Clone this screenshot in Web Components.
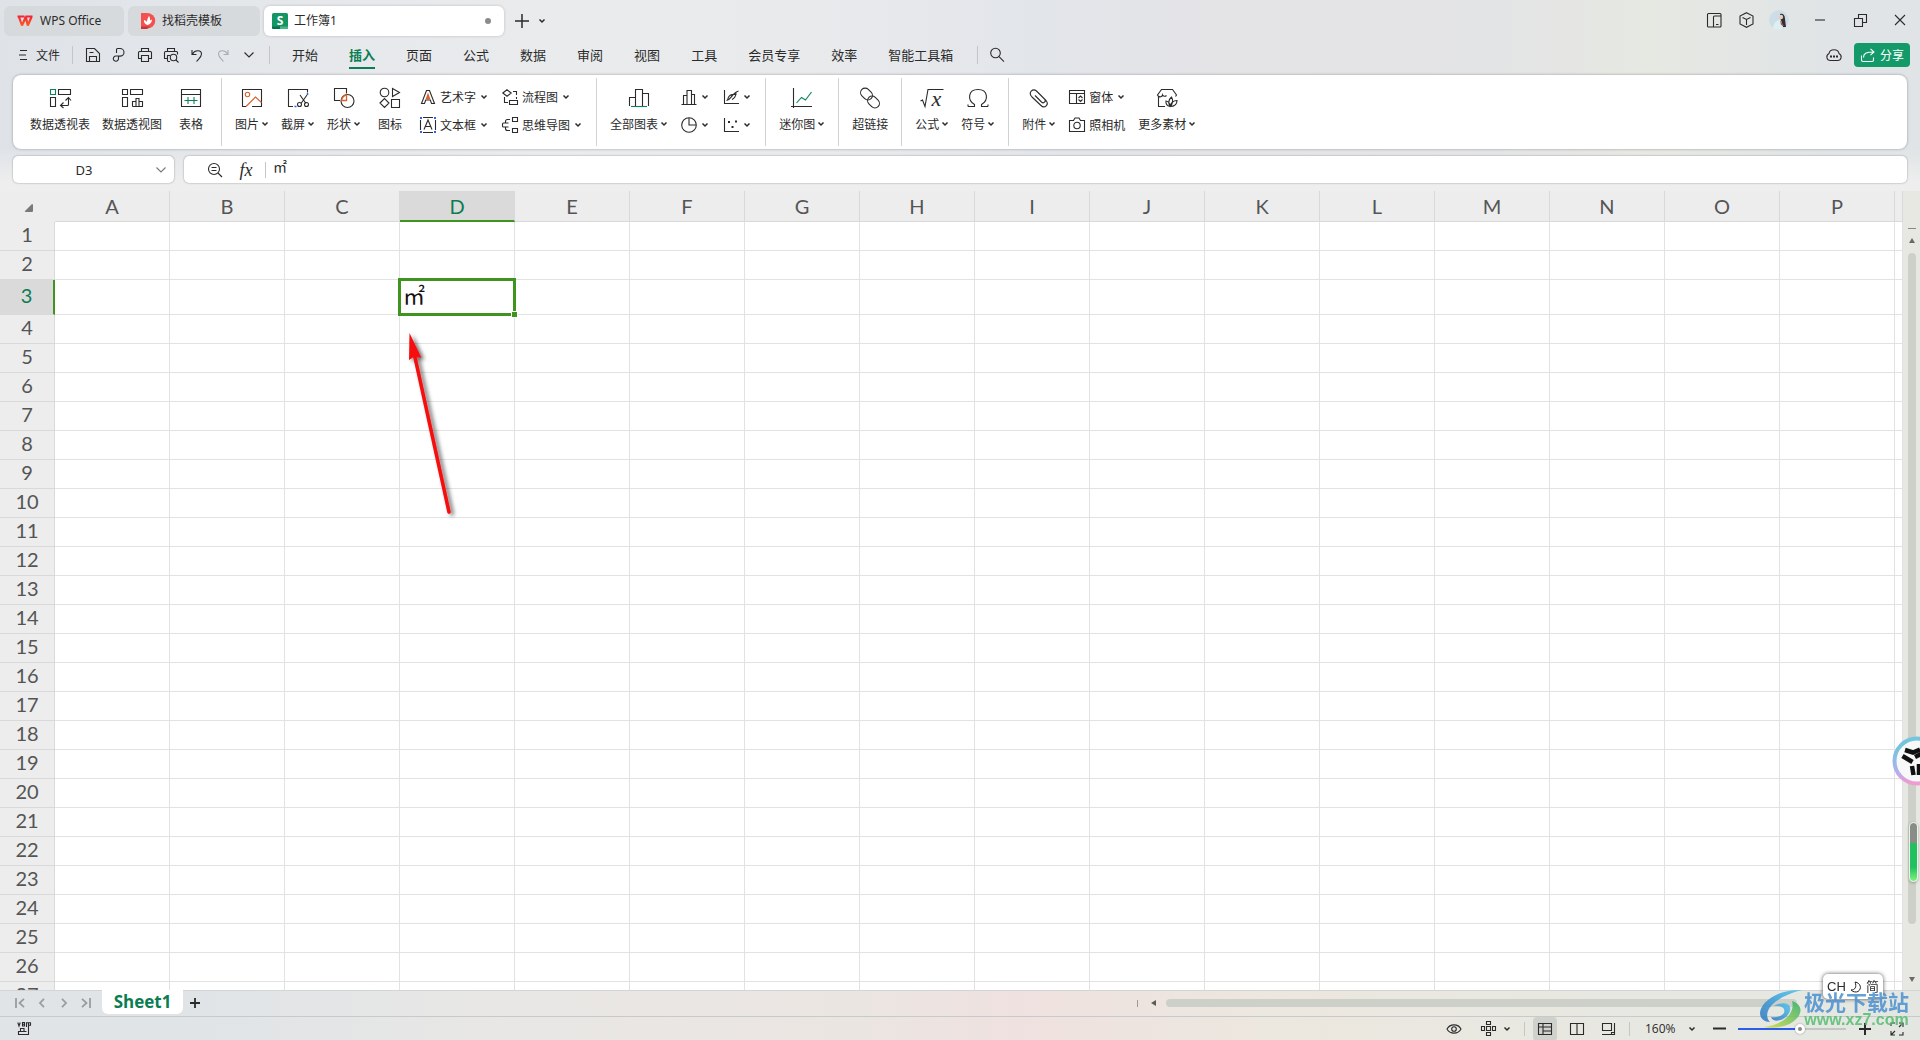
<!DOCTYPE html>
<html lang="zh-CN">
<head>
<meta charset="utf-8">
<title>工作簿1 - WPS Office</title>
<style>
html, body { margin: 0; height: 100%; }
body { font-family: "Noto Sans", "Noto Sans CJK SC", sans-serif; font-size: 12px; color: #2b2b2b; overflow: hidden; }
</style>
</head>
<body>
<wps-app></wps-app>
<script>
const RESET = `
  *, *::before, *::after { box-sizing: border-box; }
  button, input, select { font: inherit; color: inherit; background: none; border: 0; padding: 0; margin: 0; outline: 0; }
  a { color: inherit; text-decoration: none; }
  [hidden] { display: none; }`;

/* Registers an element; setup runs on the cloned content before it is connected. */
function define(name, css, html, setup) {
  const template = document.createElement('template');
  template.innerHTML = `<style>${RESET}${css}</style>${html}`;
  customElements.define(name, class extends HTMLElement {
    connectedCallback() {
      if (this.shadowRoot) return;
      const root = this.attachShadow({ mode: 'open' });
      const content = template.content.cloneNode(true);
      if (setup) setup.call(this, content);
      root.append(content);
    }
  });
}

/* Icon library: name -> [width, height, markup] */
const ICONS = {
  chev: [8, 6, '<path d="M1.5 1.5 4 4l2.500-2.500" stroke-width="1.500"/>'],
  chevWide: [12, 8, '<path d="M1.500 1.500 6 6l4.500-4.500"/>'],
  wps: [16, 12, '<defs><linearGradient id="g" x1="0" y1="0" x2="0" y2="1"><stop offset="0" stop-color="#f3253a"/><stop offset="1" stop-color="#ff5a1c"/></linearGradient></defs><path d="M.5 1.500H7.500M8.500 1.500h7M2 2l3 8.500L8.800 2l2 8.500L14.500 2" stroke="url(#g)" stroke-width="2.200" stroke-linejoin="bevel"/>'],
  docer: [14, 16, '<path d="M0 0h6a8 7.500 0 0 1 0 15.500H0z" fill="#f4504f" stroke="none"/><path d="M0 13.500h9l-3 2.500H0z" fill="#c93436" stroke="none"/><path d="M6.500 12C2.500 11 3 7 3 7s2 .5 3 2c0-3 2-6 2-6s1.500 2 1 4.500L11 6.500S11 11 6.500 12z" fill="#fff" stroke="none"/>'],
  sheet: [16, 16, '<path d="M1.500 0H14.500Q16 0 16 1.500V14.500Q16 16 14.500 16H1.500Q0 16 0 14.500V1.500Q0 0 1.500 0z" fill="#139663" stroke="none"/><path d="M0 13.500h8V16H1.500Q0 16 0 14.500z" fill="#0a7048" stroke="none"/><path d="M8 13.500h8v1Q16 16 14.500 16H8z" fill="#43b884" stroke="none"/><text x="8" y="12" text-anchor="middle" font-family="Open Sans" font-weight="700" font-size="12" fill="#fff" stroke="none">S</text>'],
  plus: [14, 14, '<path d="M7 0v14M0 7h14" stroke-width="1.500"/>'],
  menu: [10, 12, '<path d="M2 1.500h7M1 6h7M2 10.500h7"/>'],
  save: [14, 14, '<path d="M.5 13.500V.5h8L13.500 5.500v8zM3.500 13v-4.500h7V13M3.500 4.500h4"/>'],
  pdf: [14, 14, '<path d="M4.500 5V1.500Q4.500.5 5.500.5H8a4 3.800 0 0 1 0 7.600H6.500v2.400a2.600 2.600 0 1 1-2.600-2.500h2.600"/>'],
  print: [14, 14, '<path d="M3.500 4V.5h7V4M3.500 10.500H.5V4.500q0-1 1-1h11q1 0 1 1v6h-3M3.500 7.500h7v6h-7z"/>'],
  preview: [15, 15, '<path d="M3.500 4V.5h7V4M3 10.500H.5V4.500q0-1 1-1h11q1 0 1 1v2M3.500 13V7.500H6M3.500 13.500h2.500"/><circle cx="9.500" cy="9.500" r="3.200"/><path d="m12 12 2.500 2.500"/>'],
  undo: [12, 13, '<path d="M1 1v4.500h4.500M1.500 5C4 .5 10.500 1 10.500 5c0 3-2.500 4.500-5 7.500"/>'],
  redo: [12, 13, '<path d="M11 1v4.500H6.500M10.500 5C8 .5 1.500 1 1.500 5c0 3 2.500 4.500 5 7.500"/>'],
  search: [16, 16, '<circle cx="6.500" cy="6" r="4.800"/><path d="m10 9.700 5 5"/>'],
  split: [15, 15, '<path d="M7 14H1.500q-1 0-1-1V1.500q0-1 1-1H13q1 0 1 1V2.500M6.500 4q0-1 1-1H14v10q0 1-1 1H6.500zM9 11.500h2.500"/>'],
  cube: [15, 16, '<path d="M7.500.7 14 4v8l-6.500 3.300L1 12V4zM3.500 5.500l4 2 4-2M7.500 7.500v5.500"/>'],
  min: [12, 2, '<path d="M1 1h10"/>'],
  restore: [13, 13, '<path d="M.5 4.500h8v8h-8zM4.500 4V.5h8v8H9"/>'],
  close: [12, 12, '<path d="m1 1 10 10M11 1 1 11"/>'],
  cloud: [16, 14, '<path d="M4.500 12.500C.5 12.500-.5 7.500 3 5.500 4 .5 12 .5 13 5.500c3.500 2 2.500 7-1.500 7z"/><path d="M4 8.500h2M7 8.500h2M10 8.500h2" stroke-width="2"/>'],
  share: [16, 15, '<path d="M1.500 7.500v4.500q0 1.500 1.500 1.500h9q1.500 0 1.500-1.500V9.500M3.500 9.500C3.500 5.500 6 4 13.500 4M10.500.8 14 4l-3.500 3.200"/>'],
  pivot: [22, 20, '<path d="M9.500 1.500h12v5h-12zM1.500 9.500h5v9h-5z"/><path d="M1.500 1.500h5v5h-5z" stroke="#0a8457"/><path d="M19.500 10v6.500q0 1-1 1H12M16.500 12.500l3-3 2.500 3M14.500 14.500l-3 3 3 2.500"/>'],
  pivotChart: [22, 20, '<path d="M9.500 1.500h12v5h-12zM1.500 1.500h5v5h-5zM1.500 9.500h5v9h-5zM11.500 18.500v-5h3.500v5M15 18.500v-8h3v8M18 13.500h3.500v5H11.500"/>'],
  table: [22, 20, '<path d="M1.500 1.500h19v17h-19zM1.500 6.500h19"/><path d="M4.500 12.500h13M8 9v7M14 9v7" stroke="#0a8457"/>'],
  picture: [22, 20, '<path d="M11 18.500H20.500V1.500h-19v17H5"/><g stroke="#d9612c"><circle cx="6.500" cy="6.500" r="2.200"/><path d="m5 18.500 9.500-9.500 6 5.500"/></g>'],
  cut: [22, 20, '<path d="M6 18.500H1.500v-17h19v3M13 7l6 8.500M20 7l-6 8.500"/><circle cx="12.500" cy="16.500" r="2"/><circle cx="19.500" cy="16.500" r="2"/><path d="M20.500 5v2M7.500 18.500h2" stroke="#2d5ff0" stroke-width="1.500"/>'],
  shapes: [22, 22, '<path d="M7 13.500H1.500V1.500h12v5"/><circle cx="14.500" cy="14" r="6.500"/><path d="M8.500 13.500c.5-3.500 2.500-5 5-5.500v5.500z" stroke="#d9612c" stroke-width="1.300"/>'],
  icons: [22, 22, '<circle cx="5.500" cy="5.500" r="4.300"/><path d="m13.500 1.500 7 4-7 4zM1 16l4.500-4.500L10 16l-4.500 4.500zM12.500 12.500h8v8h-8z"/>'],
  art: [16, 16, '<path d="M1.500 14.500 6.500 1.500h3l5 13h-3l-1.200-3.500H5.700l-1.200 3.500z"/><path d="m5.500 10.500 2.500-7 2.500 7z" fill="#d9612c" stroke="none"/>'],
  textbox: [16, 16, '<path d="M3 .5h10M3 15.500h10M.5 3v10M15.500 3v10"/><g fill="#2d5ff0" stroke="none"><path d="M0 0h2v2H0zM14 0h2v2h-2zM0 14h2v2H0zM14 14h2v2h-2z"/></g><path d="m4 12.500 4-9.500 4 9.500M5.500 9.500h5"/>'],
  flow: [16, 16, '<path d="M.8 4 5 .8 9.200 4 5 7.200zM11 2.500h3.500V6M14.500 8v2M2.500 8v5.500H6M7.500 11.500h8v4h-8z"/>'],
  mind: [16, 16, '<path d="M6.500 6H1.500q-1 0-1 1v2q0 1 1 1h5M3.500 6V4.500q0-2 2-2H8M3.500 10v1.500q0 2 2 2H8M10.500.5h5v4h-5zM10.500 11.500h5v4h-5z"/>'],
  charts: [22, 20, '<path d="M1.500 18V9.500h6M7.500 18V1.500h7V18M14.500 5.500h6V18"/><path d="M3 18.500h16" stroke="#0a8457"/>'],
  bars: [16, 16, '<path d="M.5 15.500h15M2.500 15V6.500H6M6 15V1.500h4.500V15M10.500 5.500h3V15"/>'],
  lines: [16, 16, '<path d="M1.500 1v13.500H16M3.500 11.500c5-1 6-8 12-9.500M4.500 11c1-5 3-6 9-5.500M9 10.500c2-1 4-4 4-7"/>'],
  pie: [16, 16, '<circle cx="8" cy="8" r="7.300"/><path d="M8 1v7h7"/>'],
  scatter: [16, 16, '<path d="M1.500 1v13.500H16"/><path d="M5 4h2v2H5zM12 3.500h2v2h-2zM8.500 9h2v2h-2z" fill="currentColor" stroke="none"/>'],
  spark: [22, 20, '<path d="M2.500 0v20M0 18.500h21"/><path d="m5.500 15 5-5.500 4 2.500 6-8" stroke="#0a8457"/>'],
  link: [22, 22, '<rect x="1" y="2.500" width="13" height="9" rx="4.500" transform="rotate(45 7.500 7)"/><rect x="8" y="10.500" width="13" height="9" rx="4.500" transform="rotate(45 14.500 15)"/>'],
  formula: [24, 20, '<path d="m.5 13 2-1 2.500 6.500L8 1.500h15.500"/><text x="16.500" y="18" text-anchor="middle" font-family="Liberation Serif" font-style="italic" font-size="22" fill="currentColor" stroke="none">x</text>'],
  omega: [22, 20, '<path d="M1 18.500h6.500v-2C0 12 1 1.500 11 1.500S22 12 14.500 16.500v2H21M1 18.500v-2M21 18.500v-2"/>'],
  clip: [20, 20, '<path d="m9.500 5 7.500 7.500c3.500 4-1.500 8.500-5 5L3 9C-1.500 4 4 .3 7.500 3l8 8c2 2.500-.8 5-3 3L6 7.500"/>'],
  form: [16, 14, '<path d="M.5.5h15v13H.5zM.5 3.500h15M7.500 3.500v10M9.500 8l2-2 2 2M9.500 9.500l2 2 2-2"/>'],
  camera: [16, 16, '<path d="M.5 3.500h4l1.500-2.500h4l1.500 2.500h4v11H.5z"/><circle cx="8" cy="8.500" r="3.200"/>'],
  assets: [22, 20, '<path d="M9 18.500H2.500V8.500L1.500 7 5.500 1.500h11L20.500 7l-1 1.500M2 8c2 1.500 4 1 4.500-1 .5 1.500 3 1.500 4 .5M14 18.500c-2-3-1.500-7 1.500-9.500 2 3 1.500 7-1.500 9.500zM14 18.500c1-4 3-6 7-6 0 4-3 6-7 6zM14 18.500c-3-.5-4.500-2.500-4-5.500 3 .5 4 2.500 4 5.500z"/>'],
  lens: [16, 16, '<circle cx="7" cy="7" r="5.500"/><path d="m11 11 4 4M4.500 5.500h5M4.500 8.500h5"/>'],
  first: [10, 10, '<path d="M1 0v10M9 .8 4.500 5 9 9.200" stroke-width="1.800"/>'],
  prev: [8, 10, '<path d="M6 .8 2 5l4 4.200" stroke-width="1.800"/>'],
  next: [8, 10, '<path d="m2 .8 4 4.200-4 4.200" stroke-width="1.800"/>'],
  last: [10, 10, '<path d="M9 0v10M1 .8 5.500 5 1 9.200" stroke-width="1.800"/>'],
  add: [10, 10, '<path d="M5 0v10M0 5h10" stroke-width="1.800"/>'],
  macro: [15, 14, '<path d="M.8.5 2 4 3.200.5M5.500.5v3.500h2V.5zM5.500 2.300h2M9.500 5V.8h4v2.500h-2M11.500 1v11.500h-10V9.500h8M3.500 9V6.500h3.500V9"/>'],
  eye: [16, 12, '<path d="M1 6C4 .5 12 .5 15 6c-3 5.500-11 5.500-14 0z"/><circle cx="8" cy="6" r="2.300"/>'],
  locate: [15, 15, '<path d="M5.500 3.500v-3h4v3zM5.500 11.500v3h4v-3zM3.500 5.500h-3v4h3zM11.500 5.500h3v4h-3zM5.500 5.500h4v4h-4z"/>'],
  normal: [14, 14, '<path d="M.5 1.500h13v11H.5zM.5 5h13M5 1.500v11M5 9h8.500"/>'],
  pages: [14, 14, '<path d="M.5 1.500h13v11H.5zM7 1.500v11"/>'],
  breaks: [14, 14, '<path d="M.5 1.500h9v7h-9zM12.500 1v11.500H0M9.500 12.500v-2h3"/>'],
  minus: [13, 3, '<path d="M0 1.500h13" stroke-width="2"/>'],
  bigplus: [12, 12, '<path d="M6 0v12M0 6h12" stroke-width="2"/>'],
  full: [14, 14, '<path d="M5 1H1v3M9 1h4v4M1 9v4h4M13 10v3H9M9 5l3.500-3.500M5 9l-3.500 3.500"/>'],
  up: [6, 5, '<path d="M0 5 3 0l3 5z" fill="#6a6a6a" stroke="none"/>'],
  down: [6, 5, '<path d="M0 0h6L3 5z" fill="#6a6a6a" stroke="none"/>'],
  left: [5, 6, '<path d="M5 0v6L0 3z" fill="#5a5a5a" stroke="none"/>'],
};

define('wps-icon', `:host { display: inline-flex; flex: none; } svg { display: block; overflow: visible; }`, '<div></div>', function (root) {
  const [w, h, body] = ICONS[this.getAttribute('name')];
  root.querySelector('div').innerHTML = `<svg width="${w}" height="${h}" viewBox="0 0 ${w} ${h}" fill="none" stroke="currentColor" stroke-width="1.1" aria-hidden="true">${body}</svg>`;
});

/* Plain icon button */
define('icon-button', `
  :host { display: flex; flex: none; width: 26px; height: 24px; }
  button { flex: 1; display: flex; align-items: center; justify-content: center; border-radius: 4px; }
  :host([active]) button { background: #cfd1cd; }
  :host([muted]) { color: #a9adb2; }`,
  `<button type="button"><wps-icon></wps-icon></button>`,
  function (root) {
    root.querySelector('wps-icon').setAttribute('name', this.getAttribute('icon'));
    root.querySelector('button').setAttribute('aria-label', this.getAttribute('label') || '');
  });

define('v-rule', `:host { display: block; flex: none; width: 1px; height: var(--h, 18px); background: #c4c7ca; }`, '');

/* Document tab in the title bar */
define('doc-tab', `
  :host { display: flex; flex: none; height: 30px; }
  button { flex: 1; display: flex; align-items: center; gap: 7px; padding: 0 13px; border-radius: 6px; background: #d7dadd; white-space: nowrap; line-height: 16px; }
  :host([active]) button { background: #fff; padding: 0 8px; gap: 6px; box-shadow: 0 0 3px #0003; }
  i { display: none; width: 6px; height: 6px; border-radius: 50%; background: #8b8b8b; margin: 0 5px 0 auto; }
  :host([active]) i { display: block; }`,
  `<button type="button"><slot name="icon"></slot><span><slot></slot></span><i></i></button>`);

define('title-bar', `
  :host { display: flex; align-items: center; height: 42px; padding: 0 7px 0 4px; }
  .tabs { display: flex; gap: 4px; margin-right: 8px; }
  doc-tab:nth-child(1) { width: 120px; }
  doc-tab:nth-child(2) { width: 132px; }
  doc-tab:nth-child(3) { width: 240px; }
  .tools { display: flex; margin: 0 0 2px auto; align-items: center; gap: 6px; }
  .win { display: flex; margin-left: 12px; gap: 14px; }
  .avatar { display: block; width: 20px; height: 20px; border-radius: 50%; margin-left: 4px; }
  .more { width: 20px; }`,
  `<div class="tabs">
    <doc-tab><wps-icon slot="icon" name="wps"></wps-icon>WPS Office</doc-tab>
    <doc-tab><wps-icon slot="icon" name="docer"></wps-icon>找稻壳模板</doc-tab>
    <doc-tab active><wps-icon slot="icon" name="sheet"></wps-icon>工作簿1</doc-tab>
  </div>
  <icon-button icon="plus" label="新建" style="width:20px"></icon-button>
  <icon-button icon="chev" label="更多" class="more"></icon-button>
  <div class="tools">
    <icon-button icon="split" label="分屏"></icon-button>
    <icon-button icon="cube" label="应用"></icon-button>
    <svg class="avatar" viewBox="0 0 20 20" aria-hidden="true"><circle cx="10" cy="10" r="10" fill="#cbdde6"/><path d="M11 4c3-1 5 1 5 5l1 8h-3l-2-6z" fill="#342d32"/><circle cx="12" cy="7" r="2.200" fill="#eccbb8"/><path d="M4 18c1-6 4-8 8-8l2 9c-4 2-8 1-10-1z" fill="#dfeff0"/><path d="m11 10 4 6-3-1z" fill="#a05d62"/></svg>
    <div class="win">
      <icon-button icon="min" label="最小化"></icon-button>
      <icon-button icon="restore" label="还原"></icon-button>
      <icon-button icon="close" label="关闭"></icon-button>
    </div>
  </div>`);

define('menu-tab', `
  :host { display: flex; flex: none; font-size: 13px; }
  a { display: flex; align-items: center; height: 28px; border-bottom: 2px solid transparent; white-space: nowrap; }
  :host([active]) a { color: #0a7d52; font-weight: 700; border-bottom-color: #0a7d52; }`,
  `<a href="#"><slot></slot></a>`);

define('menu-bar', `
  :host { display: flex; align-items: center; height: 33px; padding: 0 10px 7px 18px; }
  .file { display: flex; align-items: center; gap: 8px; margin-right: 12px; }
  .quick { display: flex; margin: 0 7px; }
  nav { display: flex; gap: 31px; margin: 0 24px 0 22px; }
  .end { display: flex; align-items: center; gap: 7px; margin-left: auto; }
  .share { display: flex; align-items: center; justify-content: center; gap: 4px; width: 56px; height: 24px; border-radius: 4px; background: #139a68; color: #fff; }`,
  `<button class="file" type="button"><wps-icon name="menu"></wps-icon>文件</button>
  <v-rule></v-rule>
  <div class="quick">
    <icon-button icon="save" label="保存"></icon-button>
    <icon-button icon="pdf" label="输出为PDF"></icon-button>
    <icon-button icon="print" label="打印"></icon-button>
    <icon-button icon="preview" label="打印预览"></icon-button>
    <icon-button icon="undo" label="撤销"></icon-button>
    <icon-button icon="redo" label="恢复" muted></icon-button>
    <icon-button icon="chevWide" label="自定义"></icon-button>
  </div>
  <v-rule></v-rule>
  <nav>
    <menu-tab>开始</menu-tab><menu-tab active>插入</menu-tab><menu-tab>页面</menu-tab><menu-tab>公式</menu-tab>
    <menu-tab>数据</menu-tab><menu-tab>审阅</menu-tab><menu-tab>视图</menu-tab><menu-tab>工具</menu-tab>
    <menu-tab>会员专享</menu-tab><menu-tab>效率</menu-tab><menu-tab>智能工具箱</menu-tab>
  </nav>
  <v-rule></v-rule>
  <icon-button icon="search" label="搜索" style="width:38px"></icon-button>
  <div class="end">
    <icon-button icon="cloud" label="云"></icon-button>
    <button class="share" type="button"><wps-icon name="share"></wps-icon>分享</button>
  </div>`);

/* Large ribbon command: icon over label */
define('ribbon-button', `
  :host { display: flex; flex: none; min-width: 46px; }
  button { flex: 1; display: flex; flex-direction: column; align-items: center; padding: 0 6px; white-space: nowrap; }
  .pic { display: flex; align-items: center; height: 26px; margin-top: 10px; }
  .label { display: flex; align-items: center; gap: 2px; height: 18px; margin-top: 4px; }`,
  `<button type="button"><span class="pic"><wps-icon class="main"></wps-icon></span><span class="label"><slot></slot><wps-icon class="arrow" name="chev"></wps-icon></span></button>`,
  function (root) {
    root.querySelector('.main').setAttribute('name', this.getAttribute('icon'));
    if (!this.hasAttribute('menu')) root.querySelector('.arrow').remove();
  });

/* Small ribbon command: icon beside label */
define('ribbon-item', `
  :host { display: flex; flex: none; height: 18px; }
  button { display: flex; align-items: center; gap: 4px; white-space: nowrap; }`,
  `<button type="button"><wps-icon class="main"></wps-icon><slot></slot><wps-icon class="arrow" name="chev"></wps-icon></button>`,
  function (root) {
    root.querySelector('.main').setAttribute('name', this.getAttribute('icon'));
    if (!this.hasAttribute('menu')) root.querySelector('.arrow').remove();
    if (this.getAttribute('label')) root.querySelector('button').setAttribute('aria-label', this.getAttribute('label'));
  });

define('ribbon-column', `
  :host { display: flex; flex-direction: column; gap: 10px; padding: 13px 7px 0; }`, `<slot></slot>`);

define('ribbon-group', `
  :host { display: flex; flex: none; padding: 0 7px; border-right: 1px solid transparent; border-image: linear-gradient(#0000 4px, #d0d2d4 4px 70px, #0000 70px) 1; }
  :host(:last-of-type) { border-image: none; }`, `<slot></slot>`);

define('ribbon-bar', `
  :host { display: flex; height: 74px; margin: 0 13px; padding-left: 4px; background: #fff; border-radius: 8px; box-shadow: 0 0 3px #0005; }`,
  `<ribbon-group>
    <ribbon-button icon="pivot">数据透视表</ribbon-button>
    <ribbon-button icon="pivotChart">数据透视图</ribbon-button>
    <ribbon-button icon="table">表格</ribbon-button>
  </ribbon-group>
  <ribbon-group>
    <ribbon-button icon="picture" menu>图片</ribbon-button>
    <ribbon-button icon="cut" menu>截屏</ribbon-button>
    <ribbon-button icon="shapes" menu>形状</ribbon-button>
    <ribbon-button icon="icons">图标</ribbon-button>
    <ribbon-column>
      <ribbon-item icon="art" menu>艺术字</ribbon-item>
      <ribbon-item icon="textbox" menu>文本框</ribbon-item>
    </ribbon-column>
    <ribbon-column>
      <ribbon-item icon="flow" menu>流程图</ribbon-item>
      <ribbon-item icon="mind" menu>思维导图</ribbon-item>
    </ribbon-column>
  </ribbon-group>
  <ribbon-group>
    <ribbon-button icon="charts" menu>全部图表</ribbon-button>
    <ribbon-column>
      <ribbon-item icon="bars" label="柱形图" menu></ribbon-item>
      <ribbon-item icon="pie" label="饼图" menu></ribbon-item>
    </ribbon-column>
    <ribbon-column>
      <ribbon-item icon="lines" label="折线图" menu></ribbon-item>
      <ribbon-item icon="scatter" label="散点图" menu></ribbon-item>
    </ribbon-column>
  </ribbon-group>
  <ribbon-group><ribbon-button icon="spark" menu>迷你图</ribbon-button></ribbon-group>
  <ribbon-group><ribbon-button icon="link">超链接</ribbon-button></ribbon-group>
  <ribbon-group>
    <ribbon-button icon="formula" menu>公式</ribbon-button>
    <ribbon-button icon="omega" menu>符号</ribbon-button>
  </ribbon-group>
  <ribbon-group>
    <ribbon-button icon="clip" menu>附件</ribbon-button>
    <ribbon-column>
      <ribbon-item icon="form" menu>窗体</ribbon-item>
      <ribbon-item icon="camera">照相机</ribbon-item>
    </ribbon-column>
    <ribbon-button icon="assets" menu>更多素材</ribbon-button>
  </ribbon-group>`);

define('formula-bar', `
  :host { display: flex; gap: 10px; padding: 7px 13px 8px; }
  .box { display: flex; align-items: center; height: 27px; background: #fff; border-radius: 5px; box-shadow: 0 0 2px #0006; }
  .name { width: 161px; }
  .name input { flex: 1; min-width: 0; padding-left: 5px; text-align: center; font-size: 13px; }
  .name icon-button { width: 22px; margin-right: 2px; color: #777; }
  .formula { flex: 1; padding-left: 15px; }
  .formula icon-button { width: 32px; }
  .fx { width: 30px; font: italic 18px "Liberation Serif", serif; line-height: 24px; }
  .formula input { flex: 1; font-size: 14px; height: 20px; margin-bottom: 7px; padding-left: 7px; }
  v-rule { margin-left: 4px; --h: 16px; }`,
  `<div class="box name"><input aria-label="名称框" value="D3"><icon-button icon="chevWide" label="展开名称框"></icon-button></div>
  <div class="box formula"><icon-button icon="lens" label="浏览公式"></icon-button><button class="fx" type="button">fx</button><v-rule></v-rule><input aria-label="编辑栏" value="㎡"></div>`);

/* Worksheet */
define('sheet-grid', `
  :host { display: flex; flex: 1; min-height: 0; position: relative; overflow: hidden; }
  .view { flex: 1; min-width: 0; overflow: hidden; background: #fff; }
  table { width: 100%; table-layout: fixed; border-collapse: separate; border-spacing: 0; }
  th, td { padding: 0; height: 29px; border: 0 solid #e2e2e2; border-width: 0 1px 1px 0; overflow: hidden; white-space: nowrap; }
  th { background: #ededed; color: #555; border-color: #d9d9d9; font: 20px/26px Lato, sans-serif; }
  thead th { height: 31px; }
  thead th:first-child { border-color: #ededed; }
  thead th svg { display: block; margin: 4px 0 0 24px; }
  thead th.on { background: #dadada; color: #0a7d52; border-bottom: 2px solid #3f931f; }
  tbody th { line-height: 24px; padding-bottom: 4px; }
  tr.on > th, tr.on > td { height: 35px; }
  tr.on > th { background: #dadada; color: #0a7d52; border-right: 2px solid #3f931f; }
  td.on { overflow: visible; position: relative; font: 22px/28px "Noto Sans CJK SC", sans-serif; color: #111; padding: 0 0 6px 3px; }
  td.on::before { content: ""; position: absolute; inset: -2px; border: 3px solid #3f931f; }
  td.on::after { content: ""; position: absolute; right: -4px; bottom: -4px; width: 7px; height: 7px; background: #3f931f; border: 1px solid #fff; }
  col.head { width: 55px; } col.cell { width: 115px; }
  .bar { width: 17px; background: #e6e8e1; display: flex; flex-direction: column; align-items: center; padding: 37px 0 8px; }
  .bar i { width: 8px; height: 1px; background: #888; margin-bottom: 9px; }
  .thumb { width: 8px; border-radius: 4px; background: #cdcfc9; flex: 0 0 89%; margin: 10px 0 auto; }
  .arrow { position: absolute; left: 400px; top: 136px; overflow: visible; }`,
  `<div class="view"><table><colgroup></colgroup><thead></thead><tbody></tbody></table></div>
  <div class="bar"><i></i><wps-icon name="up"></wps-icon><div class="thumb"></div><wps-icon name="down"></wps-icon></div>
  <svg class="arrow" width="60" height="190" viewBox="0 0 60 190" aria-hidden="true">
    <defs><filter id="s" x="-50%" y="-20%" width="200%" height="140%"><feDropShadow dx="3" dy="2" stdDeviation="2" flood-color="#000" flood-opacity=".6"/></filter></defs>
    <g filter="url(#s)"><path d="M14.500 28 49 185" stroke="#f60a0a" stroke-width="3.500" stroke-linecap="round"/><path d="M9.500 6 9 33l5.500-3.500 7 1.500z" fill="#f60a0a"/></g>
  </svg>`,
  function (root) {
    const cols = [...'ABCDEFGHIJKLMNOP', ''];
    root.querySelector('colgroup').innerHTML = '<col class="head">' + cols.map(c => c ? '<col class="cell">' : '<col>').join('');
    root.querySelector('thead').innerHTML = '<tr><th aria-label="全选"><svg width="10" height="10"><path d="M8 1q1 0 1 1v6q0 1-1 1H2Q0 9 1 8z" fill="#7a7a7a"/></svg></th>' +
      cols.map(c => `<th class="${c === 'D' ? 'on' : ''}">${c}</th>`).join('') + '</tr>';
    let rows = '';
    for (let r = 1; r <= 27; r++) {
      rows += `<tr class="${r === 3 ? 'on' : ''}"><th>${r}</th>` +
        cols.map(c => r === 3 && c === 'D' ? '<td class="on">㎡</td>' : '<td></td>').join('') + '</tr>';
    }
    root.querySelector('tbody').innerHTML = rows;
  });

define('sheet-tabs', `
  :host { display: flex; height: 26px; border-top: 1px solid #d2d5d6; padding-left: 9px; }
  .nav { display: flex; color: #999ca0; margin-right: 5px; }
  .nav icon-button { width: 22px; }
  .tab { width: 81px; height: 24px; margin-top: -1px; background: #fff; border-radius: 0 0 6px 6px; color: #0a7d52; font: 700 17px/24px "Open Sans", sans-serif; }
  .add { width: 24px; }
  .scroll { display: flex; align-items: center; margin-left: auto; width: 783px; height: 26px; padding: 0 0 2px; gap: 10px; }
  .scroll i { width: 1px; height: 7px; background: #999; margin-right: 3px; }
  .scroll div { width: 631px; height: 8px; border-radius: 4px; background: #cdcfc9; }`,
  `<div class="nav">
    <icon-button icon="first" label="第一张"></icon-button><icon-button icon="prev" label="上一张"></icon-button>
    <icon-button icon="next" label="下一张"></icon-button><icon-button icon="last" label="最后一张"></icon-button>
  </div>
  <button class="tab" type="button">Sheet1</button>
  <icon-button class="add" icon="add" label="新建工作表"></icon-button>
  <div class="scroll"><i></i><wps-icon name="left"></wps-icon><div></div></div>`);

define('status-bar', `
  :host { display: flex; align-items: center; height: 24px; border-top: 1px solid #c6cacb; padding: 0 10px 0 11px; }
  .right { display: flex; align-items: center; margin-left: auto; }
  v-rule { --h: 14px; }
  .views { display: flex; gap: 8px; margin: 0 0 0 8px; }
  .views icon-button { width: 24px; }
  .views + v-rule { margin-left: 8px; }
  label { display: flex; align-items: center; margin-left: 15px; }
  select { appearance: none; width: 38px; font: 12px/16px "Open Sans", sans-serif; }
  label wps-icon { margin: 0 16px 0 5px; }
  .small { width: 14px; }
  input { appearance: none; display: block; width: 108px; height: 12px; margin: 0 12px; background: linear-gradient(90deg, #2b5cea 58%, #c3c6c4 58%) center / 100% 2px no-repeat; }
  input::-webkit-slider-thumb { appearance: none; width: 10px; height: 10px; border-radius: 50%; background: #8a8a8a; border: 3px solid #fff; box-shadow: 0 0 2px #0006; }
  .eye, .locate { width: 26px; } .locate { margin-left: 8px; } .down { width: 12px; margin-right: 11px; }`,
  `<icon-button icon="macro" label="宏"></icon-button>
  <div class="right">
    <icon-button class="eye" icon="eye" label="护眼模式"></icon-button>
    <icon-button class="locate" icon="locate" label="阅读模式"></icon-button>
    <icon-button class="down" icon="chev" label="更多"></icon-button>
    <v-rule></v-rule>
    <div class="views">
      <icon-button icon="normal" label="普通视图" active></icon-button>
      <icon-button icon="pages" label="页面布局"></icon-button>
      <icon-button icon="breaks" label="分页预览"></icon-button>
    </div>
    <v-rule></v-rule>
    <label><select aria-label="缩放比例"><option>160%</option></select><wps-icon name="chev"></wps-icon></label>
    <icon-button class="small" icon="minus" label="缩小"></icon-button>
    <input type="range" aria-label="缩放" min="0" max="100" value="58">
    <icon-button class="small" icon="bigplus" label="放大"></icon-button>
    <icon-button icon="full" label="全屏" style="margin-left:12px"></icon-button>
  </div>`);

/* Widgets that float above the window */
define('floating-widgets', `
  :host { position: fixed; inset: 0; pointer-events: none; }
  .ball { position: absolute; right: -22px; top: 736px; }
  .level { position: absolute; right: 2px; top: 822px; width: 9px; height: 60px; border: 1px solid #e9f5e6; border-radius: 5px; background: linear-gradient(#8a8c88 20px, #22c05f 20px 44px, #7cf47c); box-shadow: 0 1px 3px #0004; }
  .ime { position: absolute; right: 37px; bottom: 41px; width: 60px; height: 25px; display: flex; align-items: center; justify-content: center; gap: 4px; background: #fff; border-radius: 5px; box-shadow: 0 0 4px #000a; font: 13px/16px "Liberation Sans", "Noto Sans CJK SC", sans-serif; }
  .mark { position: absolute; right: 11px; bottom: 11px; display: flex; align-items: center; gap: 1px; opacity: .85; }
  .mark p { margin: 0; text-align: center; font: 700 21px/22px "Noto Sans CJK SC", sans-serif; color: #4a8fd0; }
  .mark p + p { font: 700 16px/16px "Liberation Sans", sans-serif; color: #55bd72; }`,
  `<svg class="ball" width="50" height="50" viewBox="0 0 50 50" aria-hidden="true">
    <defs><linearGradient id="r" x1="0" y1="0" x2=".3" y2="1"><stop offset=".2" stop-color="#74c5de"/><stop offset=".7" stop-color="#b5aef0"/><stop offset="1" stop-color="#f09bd2"/></linearGradient></defs>
    <circle cx="25" cy="25" r="22.500" fill="#f7f9f8" stroke="url(#r)" stroke-width="4"/>
    <path d="m13 14 8 2.500 7-3M10.500 20l10 6M20 30l1.500 9M23 21l8-4M27 28v11" stroke="#111" stroke-width="4.500" fill="none"/>
  </svg>
  <div class="level"></div>
  <div class="ime"><span>CH</span><svg width="12" height="12" viewBox="0 0 12 12" fill="none" stroke="#222" aria-hidden="true"><path d="M5 1c6 1 7 7 3 9.500-2 1-5 .5-7-1.500C5 9 7 6 5 1z"/></svg><span>简</span></div>
  <div class="mark">
    <svg width="44" height="40" viewBox="0 0 44 40" aria-hidden="true">
      <defs><linearGradient id="b" x1="1" y1="0" x2="0" y2="1"><stop offset="0" stop-color="#4ac5f0"/><stop offset="1" stop-color="#2c73bf"/></linearGradient><linearGradient id="c" x1="1" y1="0" x2="0" y2="1"><stop offset="0" stop-color="#2fae6a"/><stop offset="1" stop-color="#d2dc45"/></linearGradient></defs>
      <path d="M43 1C20 0 2 12 1 24c0 6 5 9 10 9C3 24 12 9 43 1z" fill="url(#b)"/>
      <path d="M14 17c15-7 22 1 14 10-5 5-14 7-16 1 4 1 10 0 13-4 2-5-3-8-11-7z" fill="url(#b)"/>
      <path d="M33 12c12 4 10 14 2 20-7 6-20 8-31 6 16-1 33-11 29-26z" fill="url(#c)"/>
    </svg>
    <div><p>极光下载站</p><p>www.xz7.com</p></div>
  </div>`);

define('wps-app', `
  :host { display: flex; flex-direction: column; height: 100vh; background: linear-gradient(90deg, #dfe3e8, #eaebed 28%, #e9eaec 42%, #e2e5ea 54%, #e4e3e6 65%, #e3e4e5 78%, #e6e8e2 86%, #e0e4e6 95%); }
  formula-bar { background: linear-gradient(#eee0, #eee 80%); }
  footer { display: block; background: linear-gradient(90deg, #e0e4e7 10%, #e8e7e5 26%, #ebe5e1 45%, #efe1df 53%, #ece7df 66%, #e8e8e1 80%, #e4e7e1); }`,
  `<title-bar></title-bar>
  <menu-bar></menu-bar>
  <ribbon-bar></ribbon-bar>
  <formula-bar></formula-bar>
  <sheet-grid></sheet-grid>
  <footer><sheet-tabs></sheet-tabs><status-bar></status-bar></footer>
  <floating-widgets></floating-widgets>`);
</script>
</body>
</html>
